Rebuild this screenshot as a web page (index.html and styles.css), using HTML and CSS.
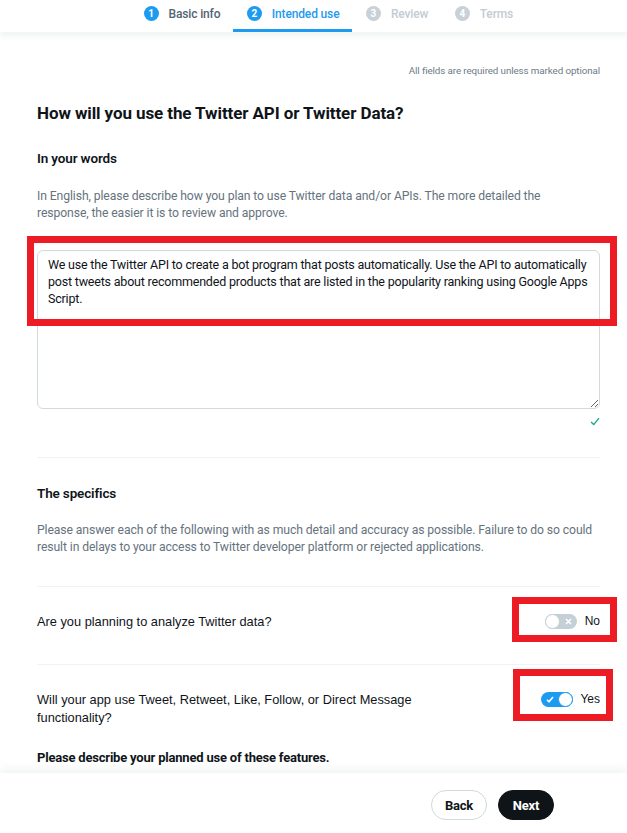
FILE: index.html
```html
<!DOCTYPE html>
<html lang="en">
<head>
<meta charset="utf-8">
<title>Intended use</title>
<link rel="stylesheet" href="styles.css">
</head>
<body>
<div class="page">
  <header class="stepper">
    <div class="step done"><span class="num">1</span><span class="label">Basic info</span></div>
    <div class="step active"><span class="num">2</span><span class="label">Intended use</span></div>
    <div class="step todo"><span class="num">3</span><span class="label">Review</span></div>
    <div class="step todo"><span class="num">4</span><span class="label">Terms</span></div>
  </header>

  <main class="content">
    <p class="notice">All fields are required unless marked optional</p>
    <h2 class="title">How will you use the Twitter API or Twitter Data?</h2>

    <section class="block">
      <h3 class="subtitle">In your words</h3>
      <p class="help">In English, please describe how you plan to use Twitter data and/or APIs. The more detailed the response, the easier it is to review and approve.</p>
      <div class="field">
        <textarea class="answer">We use the Twitter API to create a bot program that posts automatically. Use the API to automatically post tweets about recommended products that are listed in the popularity ranking using Google Apps Script.</textarea>
        <span class="mark mark-words"></span>
      </div>
      <div class="valid">
        <svg width="10" height="9" viewBox="0 0 10 9"><path d="M1 5 L3.8 7.6 L9 1.2" fill="none" stroke="#17a589" stroke-width="1.3"/></svg>
      </div>
    </section>

    <hr class="rule">

    <section class="block">
      <h3 class="subtitle spec">The specifics</h3>
      <p class="help help-spec">Please answer each of the following with as much detail and accuracy as possible. Failure to do so could result in delays to your access to Twitter developer platform or rejected applications.</p>
    </section>

    <hr class="rule rule-spec">

    <div class="question q1">
      <p class="qtext">Are you planning to analyze Twitter data?</p>
      <div class="switch-wrap">
        <span class="switch off">
          <span class="glyph">
            <svg width="7" height="7" viewBox="0 0 7 7"><path d="M1 1 L6 6 M6 1 L1 6" stroke="#fff" stroke-width="1.6"/></svg>
          </span>
          <span class="knob"></span>
        </span>
        <span class="switch-label">No</span>
        <span class="mark mark-no"></span>
      </div>
    </div>

    <hr class="divider">

    <div class="question q2">
      <p class="qtext">Will your app use Tweet, Retweet, Like, Follow, or Direct Message functionality?</p>
      <div class="switch-wrap">
        <span class="switch on">
          <span class="glyph">
            <svg width="8" height="7" viewBox="0 0 8 7"><path d="M1 3.8 L3 5.8 L7 1" fill="none" stroke="#fff" stroke-width="1.6"/></svg>
          </span>
          <span class="knob"></span>
        </span>
        <span class="switch-label">Yes</span>
        <span class="mark mark-yes"></span>
      </div>
    </div>

    <p class="sublabel">Please describe your planned use of these features.</p>
  </main>

  <footer class="actions">
    <button class="btn btn-back" type="button">Back</button>
    <button class="btn btn-next" type="button">Next</button>
  </footer>
</div>
</body>
</html>
```

FILE: styles.css
```css
* { box-sizing: border-box; }

html, body {
  margin: 0;
  padding: 0;
  background: #ffffff;
}

body {
  font-family: "Roboto", "Liberation Sans", sans-serif;
  color: #0f1419;
}

.page {
  height: 833px;
  display: flex;
  flex-direction: column;
  overflow: hidden;
}

/* ---------- Stepper ---------- */
.stepper {
  position: relative;
  z-index: 2;
  height: 32px;
  flex: 0 0 32px;
  display: flex;
  align-items: stretch;
  padding-left: 130px;
  background: #fff;
  box-shadow: 0 4px 6px rgba(120, 135, 150, 0.10);
}

.step {
  display: flex;
  align-items: center;
  gap: 10px;
  padding: 0 13px 2px 13.5px;
  border-bottom: 3px solid transparent;
  font-family: "Roboto", sans-serif;
  font-size: 12px;
  font-weight: 500;
  letter-spacing: -0.15px;
}

.step .num {
  width: 15px;
  height: 15px;
  border-radius: 50%;
  display: flex;
  align-items: center;
  justify-content: center;
  font-size: 10px;
  font-weight: 700;
  letter-spacing: 0;
  color: #fff;
  background: #1d9bf0;
}

.step.done .label { color: #536471; }
.step.active { border-bottom-color: #1d9bf0; }
.step.active .label { color: #1d9bf0; }
.step.todo .num { background: #c8d1d8; }
.step.todo .label { color: #c3ccd3; }

/* ---------- Content ---------- */
.content {
  flex: 1;
  overflow: hidden;
  padding: 0 27px 0 37px;
  font-family: "Roboto", "Liberation Sans", sans-serif;
}

.notice {
  margin: 33px 0 0;
  text-align: right;
  font-size: 9.8px;
  line-height: 12px;
  color: #6e7b86;
  letter-spacing: -0.1px;
}

.title {
  margin: 24px 0 0;
  font-size: 17px;
  line-height: 24px;
  font-weight: 700;
  letter-spacing: -0.1px;
  color: #0f1419;
}

.block { margin: 0; }

.subtitle {
  margin: 23px 0 0;
  font-size: 13.5px;
  line-height: 20px;
  font-weight: 600;
  letter-spacing: -0.15px;
  color: #0f1419;
}

.subtitle.spec { margin-top: 25px; }

.help {
  max-width: 556px;
  margin: 20px 0 0;
  font-size: 12.2px;
  line-height: 17px;
  color: #66737e;
  letter-spacing: -0.1px;
}

.help-spec { margin-top: 19px; }

.field {
  position: relative;
  margin-top: 28px;
}

.answer {
  display: block;
  width: 100%;
  height: 159px;
  margin: 0;
  padding: 5px 5px 5px 10px;
  border: 1px solid #cfd9de;
  border-radius: 6px;
  font-family: "Roboto", "Liberation Sans", sans-serif;
  font-size: 12.5px;
  line-height: 17px;
  letter-spacing: -0.2px;
  color: #0f1419;
  background: #fff;
  resize: vertical;
  outline: none;
}

.valid {
  height: 12px;
  margin-top: 6px;
  display: flex;
  justify-content: flex-end;
  align-items: center;
}

.rule {
  margin: 30px 0 0;
  border: 0;
  border-top: 1px solid #eff3f4;
}

.rule-spec { margin-top: 30px; }

.divider {
  margin: 0;
  border: 0;
  border-top: 1px solid #eff3f4;
}

/* ---------- Questions ---------- */
.question {
  display: flex;
  align-items: flex-start;
  justify-content: space-between;
  padding: 26px 0 33px;
}

.question.q2 { padding-bottom: 0; }

.qtext {
  margin: 0;
  max-width: 400px;
  font-family: "Liberation Sans", "Roboto", sans-serif;
  font-size: 12.8px;
  line-height: 18px;
  color: #0f1419;
}

.switch-wrap {
  position: relative;
  display: flex;
  align-items: center;
  gap: 8px;
  height: 16px;
  font-family: "Liberation Sans", sans-serif;
  font-size: 12px;
  color: #0f1419;
}

.switch {
  position: relative;
  width: 32px;
  height: 15px;
  border-radius: 8px;
  display: inline-block;
}

.switch.off { background: #c4cfd6; }
.switch.on { background: #1d9bf0; }

.switch .knob {
  position: absolute;
  top: 0;
  width: 15px;
  height: 15px;
  border-radius: 50%;
  background: #fff;
}

.switch.off .knob { left: 0; border: 1px solid #c4cfd6; }
.switch.on .knob { right: 0; border: 1px solid #1d9bf0; }

.switch .glyph {
  position: absolute;
  top: 0;
  height: 15px;
  display: flex;
  align-items: center;
}

.switch.off .glyph { right: 5px; }
.switch.on .glyph { left: 5px; }

.q2 .switch-wrap { gap: 7px; }

.sublabel {
  margin: 22px 0 0;
  font-size: 13px;
  line-height: 18px;
  font-weight: 700;
  letter-spacing: -0.2px;
  color: #0f1419;
}

/* ---------- Annotation marks (overlay) ---------- */
.mark {
  position: absolute;
  border: 7px solid #ed1c24;
  pointer-events: none;
}

.mark-words {
  left: -10px;
  right: -17px;
  top: -14px;
  height: 90px;
}

.mark-no {
  left: -33px;
  right: -17px;
  top: -16px;
  bottom: -13px;
}

.mark-yes {
  left: -28px;
  right: -13px;
  top: -22px;
  bottom: -14px;
}

/* ---------- Footer ---------- */
.actions {
  position: relative;
  z-index: 2;
  flex: 0 0 60px;
  display: flex;
  align-items: center;
  justify-content: flex-end;
  gap: 11px;
  padding: 4px 73px 0 0;
  background: #fff;
  box-shadow: 0 -4px 8px rgba(120, 135, 150, 0.10);
}

.btn {
  height: 30px;
  min-width: 56px;
  padding: 0 12px;
  border-radius: 15px;
  font-family: "Roboto", "Liberation Sans", sans-serif;
  font-size: 13px;
  font-weight: 700;
  letter-spacing: -0.2px;
  cursor: pointer;
}

.btn-back {
  background: #fff;
  color: #0f1419;
  border: 1px solid #cfd9de;
}

.btn-next {
  background: #0f1419;
  color: #fff;
  border: 1px solid #0f1419;
}
```
